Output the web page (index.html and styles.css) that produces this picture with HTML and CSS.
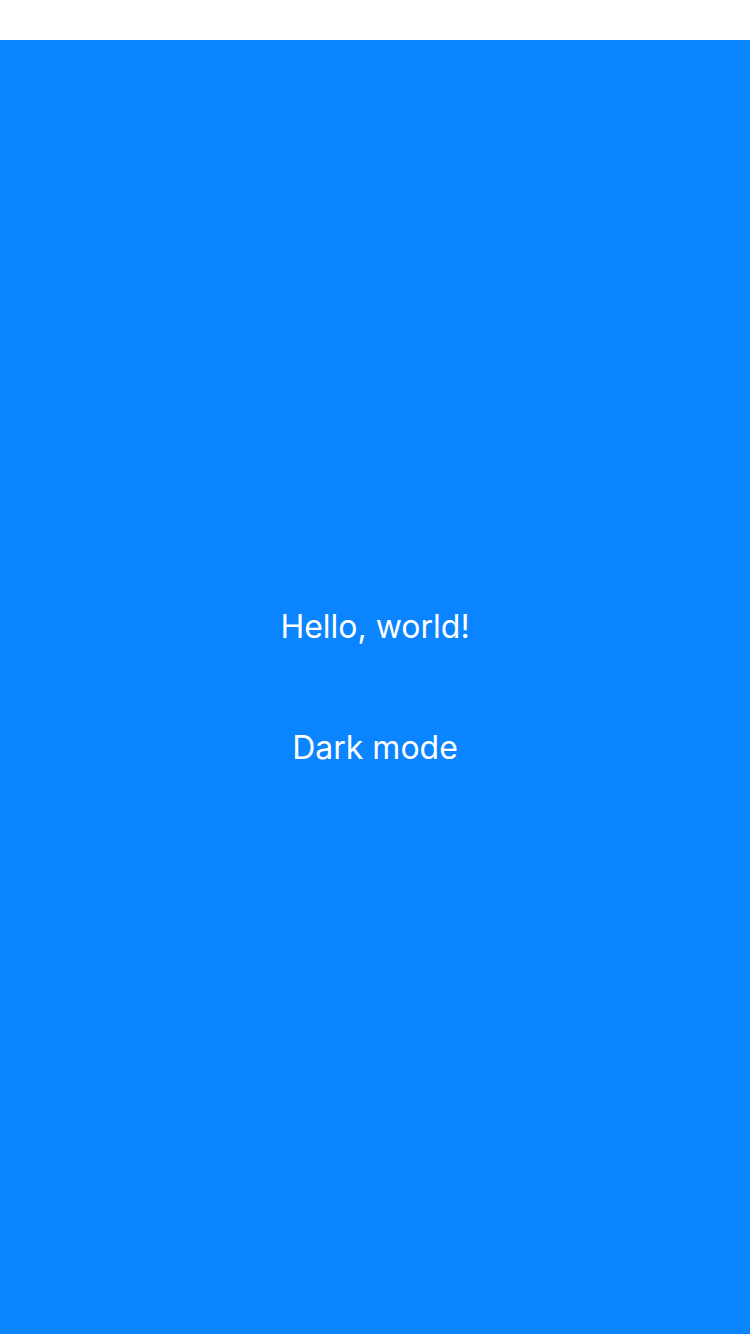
FILE: index.html
```html
<!DOCTYPE html>
<html>
<head>
<meta charset="utf-8">
<link rel="stylesheet" href="styles.css">
</head>
<body>
<div class="status"></div>
<main class="screen">
  <div class="label">Hello, world!</div>
  <div class="label">Dark mode</div>
</main>
</body>
</html>
```
FILE: styles.css
```css
html, body {
  margin: 0;
  padding: 0;
  background: #ffffff;
}
body {
  width: 750px;
  height: 1334px;
  display: flex;
  flex-direction: column;
  font-family: Inter, "Liberation Sans", sans-serif;
}
.status {
  height: 40px;
  flex: none;
  background: #ffffff;
}
.screen {
  flex: 1;
  background: #0a84ff;
  display: flex;
  flex-direction: column;
  align-items: center;
  justify-content: center;
  gap: 81px;
}
.label {
  color: #ffffff;
  font-size: 32px;
  line-height: 40px;
  font-weight: 400;
}
```
